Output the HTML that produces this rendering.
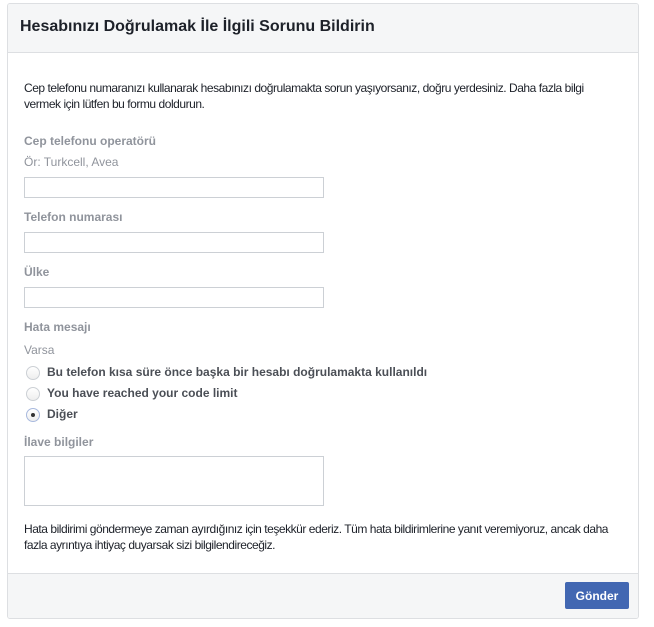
<!DOCTYPE html><html><head><meta charset="utf-8"><style>
body{margin:0;background:#fff;font-family:"Liberation Sans",Arial,sans-serif;}
.card{position:absolute;left:7px;top:3px;width:630px;height:614px;border:1px solid #dddfe2;border-radius:3px;background:#fff;overflow:hidden}
.hd{position:absolute;left:0;top:0;width:100%;height:48px;background:#f5f6f7;border-bottom:1px solid #dddfe2}
.hd div{position:absolute;left:12px;top:14px;font-size:16px;font-weight:bold;color:#1d2129}
.t{position:absolute;font-size:12px;color:#1d2129;line-height:16px;white-space:nowrap;letter-spacing:-0.46px}
.l{position:absolute;font-size:12px;color:#90949c;font-weight:bold}
.h{position:absolute;font-size:12px;color:#90949c}
.in{position:absolute;left:16px;width:298px;height:19px;border:1px solid #ccd0d5;background:#fff}
.r{position:absolute;left:18px;width:12px;height:12px;border:1px solid #ccd0d5;border-radius:50%;background:linear-gradient(#fff,#eee)}
.rl{position:absolute;left:39px;font-size:12px;font-weight:bold;color:#4b4f56}
.ft{position:absolute;left:0;top:569px;width:100%;height:45px;background:#f5f6f7;border-top:1px solid #dddfe2}
.btn{position:absolute;left:557px;top:8px;width:64px;height:27px;background:#4267b2;border:1px solid #4267b2;border-radius:2px;color:#fff;font-weight:bold;font-size:12px;text-align:center;line-height:27px;box-sizing:border-box}
</style></head><body><div class="card">
<div class="hd"><div>Hesabınızı Doğrulamak İle İlgili Sorunu Bildirin</div></div>
<div class="t" style="left:16px;top:76px">Cep telefonu numaranızı kullanarak hesabınızı doğrulamakta sorun yaşıyorsanız, doğru yerdesiniz. Daha fazla bilgi<br>vermek için lütfen bu formu doldurun.</div>
<div class="l" style="left:16px;top:130px">Cep telefonu operatörü</div>
<div class="h" style="left:16px;top:151px">Ör: Turkcell, Avea</div>
<div class="in" style="top:173px"></div>
<div class="l" style="left:16px;top:206px">Telefon numarası</div>
<div class="in" style="top:228px"></div>
<div class="l" style="left:16px;top:261px">Ülke</div>
<div class="in" style="top:283px"></div>
<div class="l" style="left:16px;top:316px">Hata mesajı</div>
<div class="h" style="left:16px;top:339px">Varsa</div>
<div class="r" style="top:362px"></div><div class="rl" style="top:361px">Bu telefon kısa süre önce başka bir hesabı doğrulamakta kullanıldı</div>
<div class="r" style="top:383px"></div><div class="rl" style="top:382px">You have reached your code limit</div>
<div class="r" style="top:404px;border-color:#a8b9de"><div style="position:absolute;left:4px;top:4px;width:4px;height:4px;border-radius:50%;background:#333"></div></div><div class="rl" style="top:403px">Diğer</div>
<div class="l" style="left:16px;top:431px">İlave bilgiler</div>
<div class="in" style="top:452px;height:48px"></div>
<div class="t" style="left:16px;top:517px">Hata bildirimi göndermeye zaman ayırdığınız için teşekkür ederiz. Tüm hata bildirimlerine yanıt veremiyoruz, ancak daha<br>fazla ayrıntıya ihtiyaç duyarsak sizi bilgilendireceğiz.</div>
<div class="ft"><div class="btn">Gönder</div></div>
</div></body></html>
